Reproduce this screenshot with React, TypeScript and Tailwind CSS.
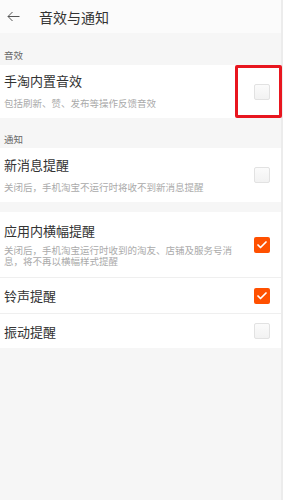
import { Check } from "lucide-react"

const font = { fontFamily: '"Noto Sans CJK SC", "Noto Sans", sans-serif' }

const Box = ({ checked }: { checked?: boolean }) =>
    checked ? (
        <div className="w-4 h-4 rounded-[2px] bg-[#ff5000] flex items-center justify-center">
            <Check className="w-3 h-3 text-white" strokeWidth={3.5} />
        </div>
    ) : (
        <div className="w-4 h-4 rounded-[2px] border border-[#e2e2e2] bg-gradient-to-b from-[#fbfbfb] to-[#f2f2f2]" />
    )

export default function App() {
    return (
        <div className="w-[283px] h-[500px] bg-[#f6f6f6] text-[#333] border-r-2 border-[#ececec]" style={font}>
            {/* header */}
            <div className="h-[33px] bg-[#fbfbfb] flex items-center">
                <svg width="13" height="11" viewBox="0 0 13 11" className="ml-[7px]" fill="none" stroke="#555" strokeWidth="1">
                    <path d="M12.5 5.5H1M5.5 1L1 5.5l4.5 4.5" />
                </svg>
                <span className="ml-[19px] text-[14px] leading-none">音效与通知</span>
            </div>

            <div className="h-[32px] flex items-end pb-[5px] px-[4px] text-[9.5px] leading-none text-[#666]">音效</div>

            {/* sound */}
            <div className="relative h-[53px] bg-white flex items-center justify-between pl-[4px] pr-[11px]">
                <div className="flex flex-col">
                    <span className="text-[13px] leading-none">手淘内置音效</span>
                    <span className="mt-[12px] text-[9.5px] leading-none text-[#aaa]">包括刷新、赞、发布等操作反馈音效</span>
                </div>
                <Box />
                <div className="absolute right-[-1px] top-0 w-[47px] h-[53px] border-[3px] border-[#e8161f] rounded-[2px]" />
            </div>

            <div className="h-[30px] flex items-end pb-[4px] px-[4px] text-[9.5px] leading-none text-[#666]">通知</div>

            <div className="h-[54px] bg-white flex items-center justify-between pl-[4px] pr-[11px]">
                <div className="flex flex-col">
                    <span className="text-[13px] leading-none">新消息提醒</span>
                    <span className="mt-[12px] text-[9.5px] leading-none text-[#aaa]">关闭后，手机淘宝不运行时将收不到新消息提醒</span>
                </div>
                <Box />
            </div>

            <div className="mt-[10px] bg-white">
                <div className="h-[66px] flex items-center justify-between pl-[4px] pr-[11px] border-b border-[#efefef]">
                    <div className="flex flex-col w-[236px] pt-[2px]">
                        <span className="text-[13px] leading-none">应用内横幅提醒</span>
                        <span className="mt-[8px] text-[9.5px] leading-[11px] text-[#aaa]">关闭后，手机淘宝运行时收到的淘友、店铺及服务号消息，将不再以横幅样式提醒</span>
                    </div>
                    <Box checked />
                </div>
                <div className="h-[36px] flex items-center justify-between pl-[4px] pr-[11px] border-b border-[#efefef]">
                    <span className="text-[13px] leading-none">铃声提醒</span>
                    <Box checked />
                </div>
                <div className="h-[34px] flex items-center justify-between pl-[4px] pr-[11px]">
                    <span className="text-[13px] leading-none">振动提醒</span>
                    <Box />
                </div>
            </div>
        </div>
    )
}
